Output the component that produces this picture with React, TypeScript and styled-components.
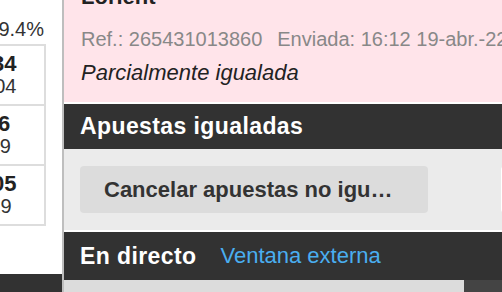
import React from "react";
import styled, { createGlobalStyle } from "styled-components";

const Global = createGlobalStyle`
  html, body { margin: 0; padding: 0; background: #ffffff; }
  body { font-family: "Liberation Sans", Arial, Helvetica, sans-serif; }
  * { box-sizing: border-box; }
`;

const Screen = styled.div`
  width: 502px;
  height: 292px;
  display: flex;
  overflow: hidden;
  background: #ffffff;
`;

const LeftPane = styled.div`
  width: 62px;
  flex: none;
  display: flex;
  flex-direction: column;
  overflow: hidden;
  background: #ffffff;
`;

const LeftScroll = styled.div`
  flex: 1;
  display: flex;
  justify-content: flex-end;
  overflow: hidden;
`;

const MarketColumn = styled.div`
  width: 118px;
  flex: none;
  display: flex;
  flex-direction: column;
  align-items: stretch;
  padding-right: 16px;
`;

const Percent = styled.div`
  height: 44px;
  display: flex;
  align-items: flex-end;
  justify-content: flex-end;
  padding: 0 2px 4px 0;
  font-size: 20px;
  line-height: 22px;
  color: #333333;
`;

const OddsList = styled.div`
  border: 2px solid #dddddd;
  display: flex;
  flex-direction: column;
`;

const OddsCell = styled.div<{ $last?: boolean }>`
  height: ${(p) => (p.$last ? 58 : 60)}px;
  border-bottom: ${(p) => (p.$last ? "none" : "2px solid #dddddd")};
  display: flex;
  flex-direction: column;
  align-items: center;
  justify-content: center;
  color: #222222;
`;

const OddsPrice = styled.div`
  font-size: 22px;
  font-weight: 700;
  line-height: 22px;
`;

const OddsVolume = styled.div`
  font-size: 20px;
  line-height: 22px;
  color: #333333;
`;

const LeftFooter = styled.div`
  height: 18px;
  flex: none;
  background: #323232;
`;

const Divider = styled.div`
  width: 2px;
  flex: none;
  background: #bebebe;
`;

const RightPane = styled.div`
  flex: 1;
  min-width: 0;
  display: flex;
  flex-direction: column;
  overflow: hidden;
`;

const BetCard = styled.div`
  background: #ffe4ea;
  padding: 0 17px 16px;
  display: flex;
  flex-direction: column;
  white-space: nowrap;
`;

const BetTitle = styled.div`
  margin-top: -16px;
  font-size: 22px;
  font-weight: 700;
  line-height: 26px;
  color: #222222;
`;

const BetMeta = styled.div`
  margin-top: 17px;
  font-size: 20px;
  line-height: 24px;
  color: #888888;
  display: flex;
  gap: 15px;
`;

const BetStatus = styled.div`
  margin-top: 9px;
  font-size: 22px;
  font-style: italic;
  line-height: 26px;
  color: #222222;
`;

const SectionHeader = styled.div<{ $height: number }>`
  height: ${(p) => p.$height}px;
  border-top: 2px solid #ffffff;
  background: #323232;
  display: flex;
  align-items: center;
  gap: 24px;
  padding-left: 16px;
  white-space: nowrap;
`;

const HeaderTitle = styled.span`
  font-size: 23px;
  font-weight: 700;
  color: #ffffff;
  letter-spacing: 0.4px;
`;

const HeaderLink = styled.span`
  font-size: 22px;
  color: #4aaef0;
`;

const ActionArea = styled.div`
  background: #ebebeb;
  padding: 17px 0 17px 16px;
  display: flex;
  gap: 73px;
`;

const ActionButton = styled.button<{ $variant?: "grey" | "white" }>`
  width: 348px;
  height: 47px;
  flex: none;
  border: none;
  border-radius: 4px;
  background: ${(p) => (p.$variant === "white" ? "#ffffff" : "#dcdcdc")};
  padding: 0 24px;
  font-family: inherit;
  font-size: 22px;
  font-weight: 700;
  color: #333333;
  text-align: left;
  white-space: nowrap;
  overflow: hidden;
  text-overflow: ellipsis;
`;

const PlayerStrip = styled.div`
  flex: 1;
  display: flex;
`;

const PlayerTab = styled.div<{ $dark?: boolean }>`
  flex: ${(p) => (p.$dark ? "none" : 1)};
  width: ${(p) => (p.$dark ? "38px" : "auto")};
  background: ${(p) => (p.$dark ? "#444444" : "#dcdcdc")};
`;

export default function App() {
  const odds = [
    { price: "2.34", volume: "1104" },
    { price: "1.6", volume: "119" },
    { price: "3.05", volume: "129" },
  ];
  return (
    <>
      <Global />
      <Screen>
        <LeftPane>
          <LeftScroll>
            <MarketColumn>
              <Percent>99.4%</Percent>
              <OddsList>
                {odds.map((o, i) => (
                  <OddsCell key={i} $last={i === odds.length - 1}>
                    <OddsPrice>{o.price}</OddsPrice>
                    <OddsVolume>{o.volume}</OddsVolume>
                  </OddsCell>
                ))}
              </OddsList>
            </MarketColumn>
          </LeftScroll>
          <LeftFooter />
        </LeftPane>
        <Divider />
        <RightPane>
          <BetCard>
            <BetTitle>Lorient</BetTitle>
            <BetMeta>
              <span>Ref.: 265431013860</span>
              <span>Enviada: 16:12 19-abr.-22</span>
            </BetMeta>
            <BetStatus>Parcialmente igualada</BetStatus>
          </BetCard>
          <SectionHeader $height={47}>
            <HeaderTitle>Apuestas igualadas</HeaderTitle>
          </SectionHeader>
          <ActionArea>
            <ActionButton>Cancelar apuestas no igualadas</ActionButton>
            <ActionButton $variant="white">Ver todas</ActionButton>
          </ActionArea>
          <SectionHeader $height={50}>
            <HeaderTitle>En directo</HeaderTitle>
            <HeaderLink>Ventana externa</HeaderLink>
          </SectionHeader>
          <PlayerStrip>
            <PlayerTab />
            <PlayerTab $dark />
          </PlayerStrip>
        </RightPane>
      </Screen>
    </>
  );
}
